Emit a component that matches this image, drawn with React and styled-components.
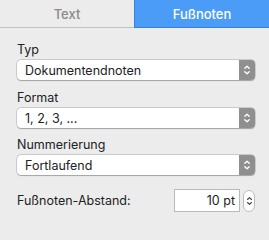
import styled, { createGlobalStyle } from "styled-components";

const Global = createGlobalStyle`
    html, body {
        margin: 0;
        padding: 0;
        background: #ececec;
    }
    body {
        font-family: "Inter", "Liberation Sans", sans-serif;
        -webkit-font-smoothing: antialiased;
    }
`;

const Panel = styled.div`
    width: 269px;
    height: 240px;
    background: #ececec;
    display: flex;
    flex-direction: column;
`;

const Tabs = styled.div`
    display: flex;
    height: 28px;
`;

const Tab = styled.div`
    flex: ${({ $active }) => ($active ? "0 0 135px" : "1")};
    display: flex;
    align-items: center;
    justify-content: center;
    font-size: 13px;
    font-weight: 500;
    color: ${({ $active }) => ($active ? "#ffffff" : "#8a8a8a")};
    background: ${({ $active }) => ($active ? "#4a9cf6" : "#ececec")};
    border-bottom: 1px solid ${({ $active }) => ($active ? "#3b82d6" : "#c3c3c3")};
    border-left: ${({ $active }) => ($active ? "1px solid #3b82d6" : "none")};
    box-sizing: border-box;
`;

const Body = styled.div`
    display: flex;
    flex-direction: column;
    padding: 14px 14px 0 17px;
`;

const Label = styled.div`
    font-size: 12.5px;
    color: #222;
    line-height: 16px;
    margin-bottom: 2px;
`;

const Group = styled.div`
    display: flex;
    flex-direction: column;
    margin-bottom: ${({ $gap }) => $gap}px;
`;

const Select = styled.div`
    height: 20px;
    display: flex;
    align-items: stretch;
    background: #fff;
    border-radius: 4px;
    box-shadow: 0 0 0 0.5px rgba(0, 0, 0, 0.25), 0 0.5px 1px rgba(0, 0, 0, 0.2);
    overflow: hidden;
`;

const SelectText = styled.div`
    flex: 1;
    display: flex;
    align-items: center;
    padding-left: 8px;
    font-size: 12.5px;
    color: #222;
`;

const Arrow = styled.div`
    flex: 0 0 16px;
    background: #8f8f8f;
    display: flex;
    align-items: center;
    justify-content: center;
`;

const Row = styled.div`
    display: flex;
    align-items: center;
`;

const RowLabel = styled.div`
    flex: 1;
    font-size: 12.5px;
    color: #222;
`;

const Input = styled.div`
    width: 66px;
    height: 23px;
    box-sizing: border-box;
    background: #fff;
    border: 1px solid #b9b9b9;
    display: flex;
    align-items: center;
    justify-content: flex-end;
    padding-right: 4px;
    font-size: 12.5px;
    color: #222;
`;

const Stepper = styled.div`
    width: 12px;
    height: 22px;
    margin-left: 3px;
    box-sizing: border-box;
    background: #fff;
    border: 1px solid #bdbdbd;
    border-radius: 6px;
    display: flex;
    align-items: center;
    justify-content: center;
`;

function Chevrons({ color, w, h }) {
    return (
        <svg width={w} height={h} viewBox="0 0 8 12" fill="none" stroke={color} strokeWidth="1.3" strokeLinecap="round" strokeLinejoin="round">
            <path d="M1.8 4.3 L4 2.2 L6.2 4.3" />
            <path d="M1.8 7.7 L4 9.8 L6.2 7.7" />
        </svg>
    );
}

function Dropdown({ label, value, gap }) {
    return (
        <Group $gap={gap}>
            <Label>{label}</Label>
            <Select>
                <SelectText>{value}</SelectText>
                <Arrow>
                    <Chevrons color="#fff" w={8} h={12} />
                </Arrow>
            </Select>
        </Group>
    );
}

export default function App() {
    return (
        <Panel>
            <Global />
            <Tabs>
                <Tab>Text</Tab>
                <Tab $active>Fußnoten</Tab>
            </Tabs>
            <Body>
                <Dropdown label="Typ" value="Dokumentendnoten" gap={10} />
                <Dropdown label="Format" value="1, 2, 3, ..." gap={9} />
                <Dropdown label="Nummerierung" value="Fortlaufend" gap={14} />
                <Row>
                    <RowLabel>Fußnoten-Abstand:</RowLabel>
                    <Input>10 pt</Input>
                    <Stepper>
                        <Chevrons color="#444" w={7} h={12} />
                    </Stepper>
                </Row>
            </Body>
        </Panel>
    );
}
